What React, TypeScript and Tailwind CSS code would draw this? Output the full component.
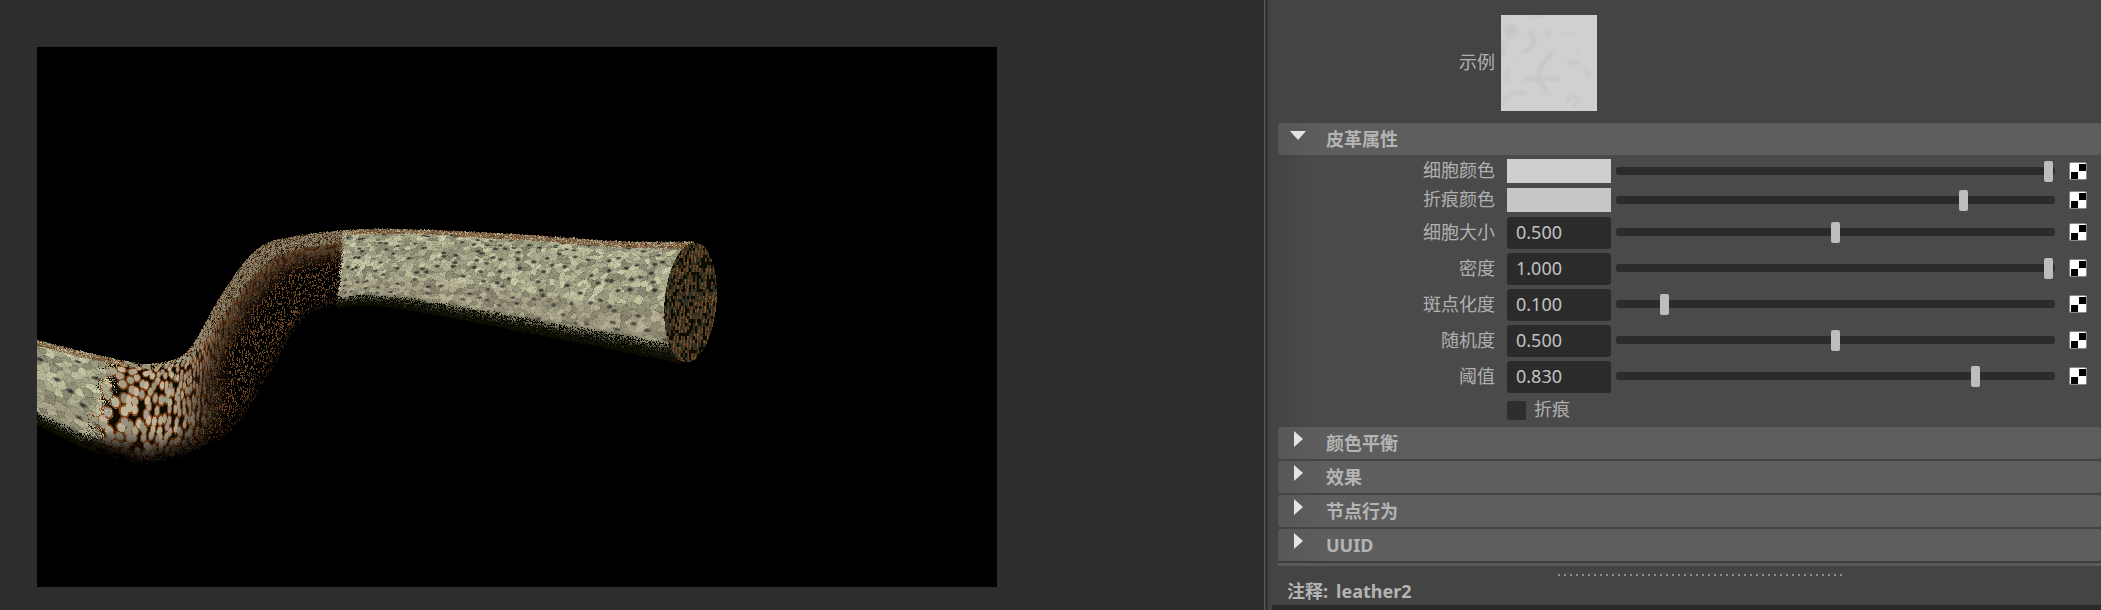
import { useMemo } from "react";

// seeded hash noise, used for the leather cells
function hash(x: number, y: number) {
  const n = Math.sin(x * 127.1 + y * 311.7) * 43758.5453;
  return n - Math.floor(n);
}

function worley(x: number, y: number) {
  const ix = Math.floor(x);
  const iy = Math.floor(y);
  let f1 = 9;
  let f2 = 9;
  let id = 0;
  for (let j = -1; j <= 1; j++) {
    for (let i = -1; i <= 1; i++) {
      const cx = ix + i + hash(ix + i, iy + j);
      const cy = iy + j + hash(iy + j + 7.3, ix + i + 2.1);
      const d = Math.hypot(cx - x, cy - y);
      if (d < f1) {
        f2 = f1;
        f1 = d;
        id = hash(ix + i + 3.7, iy + j + 9.1);
      } else if (d < f2) {
        f2 = d;
      }
    }
  }
  return { f1, f2, id };
}

function smooth(a: number, b: number, t: number) {
  const k = Math.max(0, Math.min(1, (t - a) / (b - a)));
  return k * k * (3 - 2 * k);
}

type Pt = [number, number];

function sample(pts: Pt[], t: number): Pt {
  const f = Math.max(0, Math.min(0.9999, t)) * (pts.length - 1);
  const i = Math.floor(f);
  const k = f - i;
  const p0 = pts[Math.max(0, i - 1)];
  const p1 = pts[i];
  const p2 = pts[i + 1];
  const p3 = pts[Math.min(pts.length - 1, i + 2)];
  const cr = (a: number, b: number, c: number, d: number) =>
    0.5 * (2 * b + (c - a) * k + (2 * a - 5 * b + 4 * c - d) * k * k + (3 * b - a - 3 * c + d) * k * k * k);
  return [cr(p0[0], p1[0], p2[0], p3[0]), cr(p0[1], p1[1], p2[1], p3[1])];
}

// tube edges, measured on the reference (viewport coordinates)
const TOP: Pt[] = [
  [0, 294], [50, 306], [90, 315], [116, 317], [150, 305], [183, 250], [216, 206], [250, 191],
  [316, 183], [383, 183], [450, 186], [516, 190], [590, 195], [656, 195],
];
const BOTTOM: Pt[] = [
  [0, 376], [50, 401], [90, 412], [116, 415], [166, 403], [200, 383], [233, 330], [266, 276],
  [300, 260], [343, 258], [416, 270], [483, 283], [550, 296], [643, 315],
];

const mix = (a: number[], b: number[], t: number) => a.map((v, i) => v + (b[i] - v) * t);

function leather(v: number, vx: number, run: number, across: number, grain: number) {
  const scale = 1 + smooth(120, 300, vx) * 1.3;
  const c = worley((run / 10) * scale, across * (0.5 + 0.45 * scale));
  const edge = c.f2 - c.f1;
  // round pale cells sitting in a brown net, black in the gaps
  let col = mix([164, 156, 136], [122, 66, 22], smooth(0.38, 0.46, c.f1));
  col = mix(col, [12, 8, 5], smooth(0.54, 0.66, c.f1));
  col = col.map((p) => p * (0.84 + 0.26 * c.id));

  const bend = smooth(165, 240, vx);
  const flat = 1.06 - smooth(0.66, 1, v) * 1.02;
  const bent = 0.85 - smooth(0.06, 0.5, v) * 0.85;
  const k = flat + (bent - flat) * bend;
  col = mix(col, [112, 68, 32], 0.55 * bend);

  let out = col.map((p) => p * (k * (0.72 + 0.5 * grain * bend + 0.28 * (1 - bend))));
  // thin lit ridges on the side turned away from the light
  if (edge < 0.18 && v < 0.96 && grain > 0.4) {
    out = mix(out, [142, 86, 42], Math.max(0, 1 - k) * 0.8 * (1 - smooth(0.78, 0.96, v) * 0.6));
  }
  // pale grey-green rim on the top of the bend
  if (v < 0.05 + 0.1 * bend && grain > 0.45) out = mix(out, [146, 148, 120], 0.7);
  return out;
}

function skin(v: number, vx: number, run: number, across: number, grain: number) {
  const far = vx > 200;
  const c1 = far ? worley(run / 6, across * 1.9) : worley(run / 9, across * 1.35);
  const c2 = far ? worley(run / 13 + 5, across * 1.15 + 2) : worley(run / 20 + 5, across * 0.9 + 2);
  // small soft facets with a scatter of dark pits
  const facet = 0.74 + 0.36 * c1.id - smooth(0.12, 0, c1.f2 - c1.f1) * 0.2;
  const pit = c2.id > (far ? 0.42 : 0.72) ? smooth(0.3, 0.04, c2.f1) * 0.9 : 0;
  let col = mix([172, 172, 142], [50, 52, 48], pit);
  col = col.map((p) => p * facet * (0.92 + 0.16 * grain));
  const lit = 1.05 - smooth(0.8, 1, v) * 0.85;
  col = col.map((p) => p * lit);
  if (v > 0.6 && v < 0.88) col = mix(col, [126, 110, 94], 0.22);
  if (v < 0.05 && grain > 0.4) col = mix(col, [112, 62, 26], 0.75);
  if (v > 0.86 && grain > 4.4 - 4.4 * v) col = [6, 6, 3];
  return col;
}

function shade(v: number, x: number, y: number, run: number) {
  const theta = Math.asin(Math.max(-0.999, Math.min(0.999, 2 * v - 1)));
  const across = (theta / Math.PI + 0.5) * 14;
  const vx = x + 37;
  const grain = hash(Math.floor(x), Math.floor(y));
  // the left seam is soft, the right one is nearly straight
  const left = 112 - v * 20 + (grain - 0.5) * 26;
  const right = 343 - v * 6 + (grain - 0.5) * 4;
  if (vx > left && vx < right) return leather(v, vx, run, across, grain);
  return skin(v, vx, run, across, grain);
}

function buildTube() {
  const W = 700;
  const H = 540;
  const seen = new Uint32Array(W * H);
  let run = 0;
  let last = sample(TOP, 0);
  const steps = 2600;
  for (let i = 0; i <= steps; i++) {
    const s = i / steps;
    const a = sample(TOP, s);
    const b = sample(BOTTOM, s);
    run += Math.hypot(a[0] - last[0], a[1] - last[1]);
    last = a;
    const len = Math.hypot(b[0] - a[0], b[1] - a[1]);
    const count = Math.ceil(len * 1.6);
    for (let j = 0; j <= count; j++) {
      const v = j / count;
      const x = a[0] + (b[0] - a[0]) * v;
      const jag = v > 0.85 || v < 0.02 ? (hash(i % 37, j) - 0.5) * 2 : 0;
      const y = a[1] + (b[1] - a[1]) * v + jag;
      const px = Math.round(x);
      const py = Math.round(y);
      if (px < 0 || py < 0 || px >= W || py >= H) continue;
      const key = py * W + px;
      if (seen[key]) continue;
      const c = shade(v, px, py, run);
      const q = c.map((p) => Math.max(0, Math.min(255, Math.round(p / 12) * 12)));
      seen[key] = (q[0] << 16) | (q[1] << 8) | q[2] | 0x1000000;
    }
  }
  // the cut end of the tube
  const cx = 653;
  const cy = 255;
  for (let py = cy - 62; py <= cy + 62; py++) {
    for (let px = cx - 30; px <= cx + 30; px++) {
      const dx = px - cx + (py - cy) * 0.07;
      const dy = py - cy;
      if ((dx * dx) / (26 * 26) + (dy * dy) / (60 * 60) > 1) continue;
      const n = hash(Math.floor(px / 2), Math.floor(py / 3.4));
      const k = 0.5 + 0.5 * Math.sin(px * 1.9 + py * 0.25);
      let col = [12, 9, 5];
      if (n > 0.5 && k > 0.4) col = mix([70, 42, 18], [140, 92, 50], hash(px, py));
      else if (n > 0.3) col = [50, 44, 32];
      const q = col.map((p) => Math.round(p / 12) * 12);
      seen[py * W + px] = (q[0] << 16) | (q[1] << 8) | q[2] | 0x1000000;
    }
  }
  // group runs of one colour into one path per colour
  const paths = new Map<number, string[]>();
  for (let y = 0; y < H; y++) {
    let x = 0;
    while (x < W) {
      const val = seen[y * W + x];
      if (!val) {
        x++;
        continue;
      }
      let end = x + 1;
      while (end < W && seen[y * W + end] === val) end++;
      if (!paths.has(val)) paths.set(val, []);
      paths.get(val)!.push(`M${x} ${y}h${end - x}v1h${x - end}z`);
      x = end;
    }
  }
  return Array.from(paths.entries()).map(([val, d]) => ({
    fill: `rgb(${(val >> 16) & 255},${(val >> 8) & 255},${val & 255})`,
    d: d.join(""),
  }));
}

function Viewport() {
  const tube = useMemo(buildTube, []);
  return (
    <div className="w-[960px] h-[540px] bg-black">
      <svg width="960" height="540" viewBox="0 0 960 540" shapeRendering="crispEdges" className="block">
        {tube.map((p) => (
          <path key={p.fill} fill={p.fill} d={p.d} />
        ))}
      </svg>
    </div>
  );
}

function Checker() {
  return (
    <svg width="18" height="18" viewBox="0 0 18 18" className="block shrink-0">
      <rect x="0.5" y="0.5" width="17" height="17" rx="1.5" fill="#fff" stroke="#8a8a8a" />
      <rect x="10" y="2" width="7" height="7" fill="#000" />
      <rect x="2" y="10" width="7" height="7" fill="#000" />
    </svg>
  );
}

function Slider({ handle }: { handle?: number }) {
  return (
    <div className="relative w-[439px] h-2 bg-[#2b2b2b] rounded-[3px]">
      {handle !== undefined && (
        <div
          className="absolute top-[-6px] w-[9px] h-[21px] bg-[#bdbdbd] rounded-[2px]"
          style={{ left: handle - 4 }}
        />
      )}
    </div>
  );
}

function Label({ children }: { children: string }) {
  return <div className="w-[227px] text-right leading-none shrink-0 pb-0.5">{children}</div>;
}

function ColorRow({ label, color, handle }: { label: string; color: string; handle: number }) {
  return (
    <div className="flex items-center h-6">
      <Label>{label}</Label>
      <div className="w-[104px] h-6 ml-3 mr-[5px]" style={{ background: color }} />
      <Slider handle={handle} />
      <div className="ml-[14px]">
        <Checker />
      </div>
    </div>
  );
}

function NumberRow({ label, value, handle }: { label: string; value: string; handle: number }) {
  return (
    <div className="flex items-center h-8">
      <Label>{label}</Label>
      <div className="w-[104px] h-8 ml-3 mr-[5px] pl-[9px] pb-0.5 bg-[#2b2b2b] rounded-[3px] text-[#c2c2c2] flex items-center">
        {value}
      </div>
      <div className="-mt-0.5">
        <Slider handle={handle} />
      </div>
      <div className="ml-[14px] -mt-0.5">
        <Checker />
      </div>
    </div>
  );
}

function SectionHeader({ title, open }: { title: string; open?: boolean }) {
  return (
    <div className="ml-[10px] h-8 flex items-center bg-gradient-to-r from-[#575757] to-[#5e5e5e] to-[6%] rounded-[3px] font-bold text-[#b4b4b4]">
      <div className="w-12 pl-3 flex">
        {open ? (
          <svg width="16" height="9" viewBox="0 0 16 9" className="-mt-2">
            <path d="M0 0H16L8 9Z" fill="#e4e4e4" />
          </svg>
        ) : (
          <svg width="9" height="16" viewBox="0 0 9 16" className="-mt-2 ml-1">
            <path d="M0 0V16L9 8Z" fill="#e4e4e4" />
          </svg>
        )}
      </div>
      <span className="leading-none">{title}</span>
    </div>
  );
}

function SamplePreview() {
  return (
    <svg width="96" height="96" viewBox="0 0 96 96" className="block bg-[#d0d0d0]">
      <defs>
        <filter id="soft" x="-10%" y="-10%" width="120%" height="120%">
          <feGaussianBlur stdDeviation="1.2" />
        </filter>
      </defs>
      <g filter="url(#soft)" fill="#c8c8c8" stroke="#c8c8c8" strokeWidth="4" strokeLinecap="round" strokeLinejoin="round">
        <path d="M4 14L10 10L16 16L8 24Z" />
        <path d="M28 18C36 20 34 34 24 36" fill="none" strokeWidth="5" />
        <path d="M2 40V28" fill="none" />
        <path d="M44 20L46 15L49 20Z" strokeWidth="2" />
        <path d="M50 38C47 44 42 46 40 52C38 58 36 62 36 66" fill="none" strokeWidth="5" />
        <path d="M24 64H58M40 66L46 78" fill="none" />
        <path d="M66 48H78M6 54V66M84 52L88 62" fill="none" strokeWidth="3" />
        <path d="M2 88C6 78 14 76 24 78" fill="none" />
        <path d="M66 88C68 80 76 78 78 86M72 92L80 84" fill="none" strokeWidth="3" />
        <path d="M64 18H72M76 34L79 39M30 1H44M14 44V46" fill="none" strokeWidth="2" />
      </g>
    </svg>
  );
}

const numberRows = [
  { label: "细胞大小", value: "0.500", handle: 219 },
  { label: "密度", value: "1.000", handle: 432 },
  { label: "斑点化度", value: "0.100", handle: 48 },
  { label: "随机度", value: "0.500", handle: 219 },
  { label: "阈值", value: "0.830", handle: 359 },
];

export default function App() {
  return (
    <div
      className="flex w-[2101px] h-[610px] overflow-hidden bg-[#2d2d2d] text-[18px] text-[#b0b0b0]"
      style={{ fontFamily: '"Noto Sans", "Noto Sans CJK SC", sans-serif' }}
    >
      <div className="w-[1264px] h-full pl-[37px] pt-[47px] shrink-0">
        <Viewport />
      </div>
      <div className="w-px h-full bg-[#5c5c5c] shrink-0" />
      <div className="w-[3px] h-full bg-[#333333] shrink-0" />

      <div className="flex-1 h-full flex flex-col bg-[#444444]">
        <div className="flex items-center pt-[15px]">
          <Label>示例</Label>
          <div className="ml-[6px]">
            <SamplePreview />
          </div>
        </div>

        <div className="mt-3">
          <SectionHeader title="皮革属性" open />
        </div>
        <div className="pt-1 h-[272px] bg-gradient-to-r from-[#444444] from-[14px] to-[#4a4a4a] to-[40px] flex flex-col">
          <ColorRow label="细胞颜色" color="#cfcfcf" handle={432} />
          <div className="h-[5px]" />
          <ColorRow label="折痕颜色" color="#c6c6c6" handle={347} />
          <div className="h-[5px]" />
          <div className="flex flex-col gap-1">
            {numberRows.map((r) => (
              <NumberRow key={r.label} {...r} />
            ))}
          </div>
          <div className="flex items-center mt-[7px] ml-[239px]">
            <div className="w-[19px] h-[19px] bg-[#2e2e2e] rounded-[2px]" />
            <span className="ml-2 leading-none pb-0.5">折痕</span>
          </div>
        </div>

        <div className="flex flex-col gap-0.5">
          <SectionHeader title="颜色平衡" />
          <SectionHeader title="效果" />
          <SectionHeader title="节点行为" />
          <SectionHeader title="UUID" />
        </div>
        <div className="h-0.5 ml-[10px] bg-[#3e3e3e]" />
        <div className="ml-[10px] h-[3px] bg-[#5a5a5a]" />

        <div className="h-[39px] bg-[#444444]">
          <div className="flex gap-1 pl-[290px] pt-2">
            {Array.from({ length: 48 }).map((_, i) => (
              <div key={i} className="w-0.5 h-0.5 bg-[#8c8c8c]" />
            ))}
          </div>
          <div className="pl-[19px] mt-[3px] font-bold text-[#b4b4b4] leading-[24px] flex gap-2">
            <span>注释:</span>
            <span>leather2</span>
          </div>
        </div>
        <div className="flex-1 ml-1 bg-[#2a2a2a]" />
      </div>
    </div>
  );
}
